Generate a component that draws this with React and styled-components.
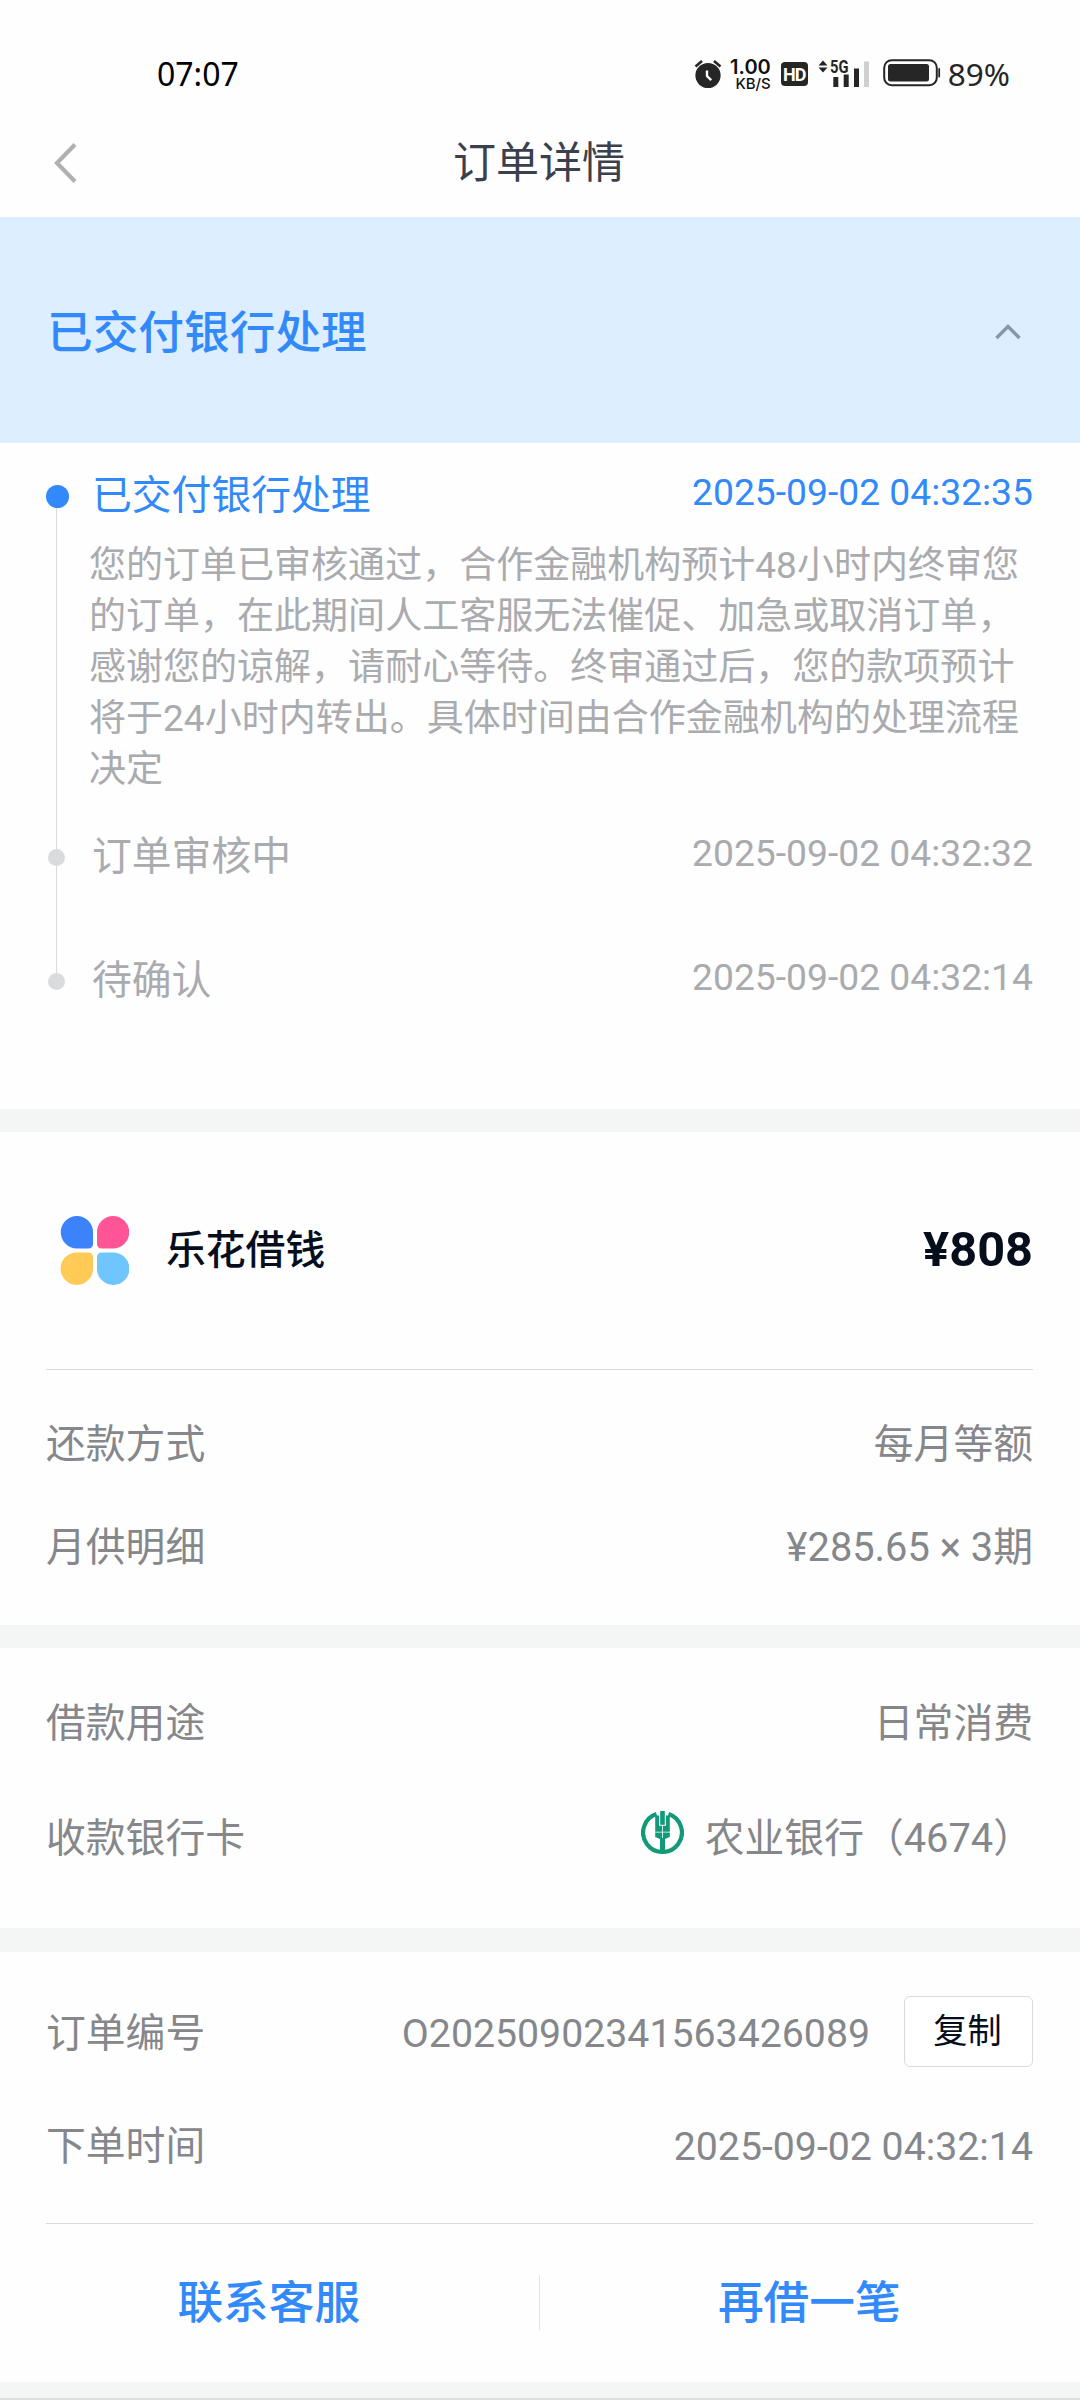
import styled, { createGlobalStyle } from 'styled-components'

const colors = {
  blue: '#3189fa',
  banner: '#dceeff',
  ink: '#060e1c',
  title: '#3c3f4c',
  label: '#85878b',
  muted: '#aaabae',
  dot: '#dadbdd',
  line: '#d9dadc',
  band: '#f4f6f6',
  status: '#262626',
}

const fontSize = {
  small: '34.2px',
  number: '39.25px',
  body: '39.8px',
  title: '43px',
  large: '45.7px',
}

const GlobalStyle = createGlobalStyle`
  * {
    box-sizing: border-box;
  }

  body {
    margin: 0;
    background: #fefefe;
    font-family: Roboto, 'Noto Sans CJK SC', sans-serif;
  }
`

const Screen = styled.div`
  display: flex;
  flex-direction: column;
  width: 1080px;
  height: 2400px;
  overflow: hidden;
`

const StatusBar = styled.div`
  display: flex;
  justify-content: space-between;
  align-items: center;
  height: 107px;
  padding: 40px 70px 0 157px;
  color: ${colors.status};
  font-family: 'Noto Sans', sans-serif;
  font-size: 32px;
  line-height: 36px;
`

const Clock = styled.span`
  color: #000;
`

const StatusIcons = styled.div`
  display: flex;
  align-items: center;
  font-size: 31.5px;
`

const Speed = styled.div`
  display: flex;
  flex-direction: column;
  align-items: flex-end;
  width: 40px;
  margin: 0 10px 0 9px;
  color: #111;
  font-family: Inter, sans-serif;
  font-size: 20px;
  font-weight: 600;
  line-height: 20px;

  small {
    font-size: 15px;
    font-weight: 500;
    line-height: 14px;
  }
`

const HdBadge = styled.span`
  display: flex;
  justify-content: center;
  width: 27px;
  height: 24px;
  border-radius: 4px;
  background: ${colors.status};
  color: #fff;
  font-family: Roboto, sans-serif;
  font-size: 18px;
  font-weight: 700;
  line-height: 25px;
  letter-spacing: -1px;
`

const Signal = styled.svg`
  margin-left: 10px;
`

const Battery = styled.svg`
  margin: -2px 7px 0 13px;
`

const Header = styled.div`
  display: grid;
  grid-template-columns: 100px 1fr 102px;
  align-items: center;
  height: 110px;

  h1 {
    margin: 0;
    padding-top: 2px;
    color: ${colors.title};
    font-size: ${fontSize.title};
    font-weight: 400;
    line-height: 60px;
    text-align: center;
  }
`

const Back = styled.svg`
  margin: 2px 0 0 52px;
`

const Banner = styled.div`
  display: flex;
  justify-content: space-between;
  align-items: center;
  height: 226px;
  padding: 0 59px 0 47px;
  background: ${colors.banner};
  color: ${colors.blue};
  font-size: ${fontSize.large};
  font-weight: 500;

  span {
    padding-bottom: 3px;
  }

  svg {
    margin-top: 3px;
  }
`

const Timeline = styled.ol`
  height: 666px;
  margin: 0;
  padding: 27px 47px 0 45px;
  list-style: none;
`

const TimelineItem = styled.li`
  display: flex;
  height: ${(props) => props.$height}px;
  color: ${(props) => (props.$active ? colors.blue : colors.muted)};
`

const Rail = styled.div`
  display: flex;
  flex-direction: column;
  align-items: center;
  width: 23px;
`

const RailLine = styled.span`
  width: 1px;
  height: ${(props) => props.$height || 'auto'};
  flex: ${(props) => (props.$height ? 'none' : 1)};
  background: ${(props) => (props.$hidden ? 'transparent' : colors.line)};
`

const Dot = styled.span`
  flex: none;
  width: ${(props) => (props.$active ? 23 : 17)}px;
  height: ${(props) => (props.$active ? 23 : 17)}px;
  margin-left: ${(props) => (props.$active ? 2 : 0)}px;
  border-radius: 50%;
  background: ${(props) => (props.$active ? colors.blue : colors.dot)};
`

const Step = styled.div`
  flex: 1;
  min-width: 0;
`

const StepHead = styled.div`
  display: flex;
  justify-content: space-between;
  align-items: center;
  height: 48px;
  padding-left: 24px;
  font-size: ${fontSize.body};
  line-height: 48px;

  span {
    padding-top: 3px;
  }

  time {
    padding-bottom: 4px;
    font-size: 37.25px;
  }
`

const Description = styled.p`
  width: 945px;
  margin: 22px 0 0 21px;
  color: ${colors.muted};
  font-size: 37.03px;
  line-height: 51.1px;
`

const Band = styled.div`
  flex: none;
  height: ${(props) => props.$height || 23}px;
  background: ${colors.band};
`

const Section = styled.section`
  height: ${(props) => props.$height}px;
  padding: ${(props) => props.$top || 0}px 47px 0 46px;
`

const Product = styled.div`
  display: flex;
  align-items: center;
  height: 238px;
  margin-bottom: 23px;
  border-bottom: 1px solid ${colors.line};
  color: ${colors.ink};
`

const ProductName = styled.span`
  flex: 1;
  margin-left: 37px;
  padding-bottom: 8px;
  font-size: ${fontSize.body};
  font-weight: 500;
`

const Amount = styled.strong`
  padding-bottom: 3px;
  font-size: 48.7px;
  font-weight: 700;
`

const Row = styled.div`
  display: flex;
  align-items: center;
  justify-content: space-between;
  height: ${(props) => props.$height}px;
  color: ${colors.label};
  font-size: ${fontSize.body};
  line-height: 50px;
`

const Value = styled.span`
  display: flex;
  align-items: center;
  font-size: ${(props) => (props.$number ? fontSize.number : 'inherit')};
`

const BankLogo = styled.svg`
  margin: -12px 21px 0 0;
`

const CopyButton = styled.button`
  width: 129px;
  height: 71px;
  margin: -4px 0 0 34px;
  padding: 0 2px 1px 0;
  border: 1px solid ${colors.line};
  border-radius: 6px;
  background: #fff;
  color: ${colors.ink};
  font: inherit;
  font-size: ${fontSize.small};
  line-height: 60px;
`

const Divider = styled.hr`
  height: 1px;
  margin: 20px 0 0;
  border: 0;
  background: ${colors.line};
`

const Actions = styled.div`
  display: flex;
  align-items: center;
  height: 157px;
  margin: 0 -46px 0 -47px;
`

const Action = styled.a`
  flex: 1;
  padding-top: 2px;
  color: ${colors.blue};
  font-size: ${fontSize.large};
  font-weight: 500;
  line-height: 53px;
  text-align: center;

  & + & {
    border-left: 1px solid #e2e3e5;
  }
`

const BottomEdge = styled.div`
  flex: 1;
  border-bottom: 2px solid #dcdddd;
  background: ${colors.band};
`

const steps = [
  {
    title: '已交付银行处理',
    time: '2025-09-02 04:32:35',
    height: 361,
    description:
      '您的订单已审核通过，合作金融机构预计48小时内终审您的订单，在此期间人工客服无法催促、加急或取消订单，感谢您的谅解，请耐心等待。终审通过后，您的款项预计将于24小时内转出。具体时间由合作金融机构的处理流程决定',
  },
  { title: '订单审核中', time: '2025-09-02 04:32:32', height: 124 },
  { title: '待确认', time: '2025-09-02 04:32:14', height: 48 },
]

const AlarmIcon = () => (
  <svg width="28" height="30" viewBox="0 0 28 30" fill="none">
    <circle cx="14" cy="16.5" r="12.6" fill={colors.status} />
    <path d="M1.5 7.5 8 2M26.5 7.5 20 2" stroke={colors.status} strokeWidth="2.6" />
    <path d="M13 11.5v5.6l4.2 4" stroke="#fff" strokeWidth="2.4" />
  </svg>
)

const SignalIcon = () => (
  <Signal width="52" height="38" viewBox="0 -4 52 38" fill={colors.status}>
    <path d="M.5 6.5 5 1.5l4.5 5zM.5 8.5 5 13.5l4.5-5z" />
    <text x="12" y="13.500" fontFamily="Roboto" fontSize="17.5" fontWeight="700" textLength="18.5" lengthAdjust="spacingAndGlyphs">
      5G
    </text>
    <rect x="15.3" y="18" width="5" height="10" />
    <rect x="25.7" y="15.5" width="5" height="12.5" />
    <rect x="36" y="9.5" width="5" height="18.5" />
    <rect x="46" y="2.5" width="5" height="25.5" fill="#cfcfcf" />
  </Signal>
)

const BatteryIcon = () => (
  <Battery width="58" height="28" viewBox="0 0 58 28">
    <rect x="1.2" y="1.2" width="52.6" height="25" rx="7.5" fill="none" stroke={colors.status} strokeWidth="2" />
    <rect x="5" y="5" width="41" height="17.5" rx="2.5" fill={colors.status} />
    <rect x="55.3" y="9" width="1.8" height="9.5" rx="0.9" fill={colors.status} />
  </Battery>
)

const CloverLogo = () => (
  <svg width="83" height="83" viewBox="0 0 83 83">
    <path d="M31 7a16 16 0 0 1 16 16v12a4.5 4.5 0 0 1-4.5 4.5H31A16.2 16.2 0 0 1 31 7z" fill="#3c83fb" />
    <path d="M67 7a16.2 16.2 0 0 1 0 32.5H55.5A4.5 4.5 0 0 1 51 35V23A16 16 0 0 1 67 7z" fill="#ff5597" />
    <path d="M31 43.5h11.5A4.5 4.5 0 0 1 47 48v12a16.2 16.2 0 1 1-16-16.5z" fill="#ffca55" />
    <path d="M55.5 43.5H67A16.2 16.2 0 1 1 51 60V48a4.5 4.5 0 0 1 4.5-4.5z" fill="#6fc6ff" />
  </svg>
)

const WheatLogo = () => (
  <BankLogo width="43" height="43" viewBox="0 0 43 43" fill="#109a78">
    <path d="M15.5 3.1A19.4 19.4 0 1 0 27.5 3.1" fill="none" stroke="#109a78" strokeWidth="4.2" />
    <path d="M19.2 0h4.6v13.8h-4.6z" />
    <path d="M14.2 4.5h3.8v10.3h3.1v5.9h-6.9zM28.8 4.5H25v10.3h-3.1v5.9h6.9z" />
    <path d="M14.2 21.5h6.9V28H19l-4.8-2zM28.8 21.5h-6.900V28H24l4.8-2z" />
    <path d="M19 27h5v14h-5z" />
  </BankLogo>
)

const App = () => {
  return (
    <>
      <GlobalStyle />
      <Screen>
        <StatusBar>
          <Clock>07:07</Clock>
          <StatusIcons>
            <AlarmIcon />
            <Speed>
              1.00
              <small>KB/S</small>
            </Speed>
            <HdBadge>HD</HdBadge>
            <SignalIcon />
            <BatteryIcon />
            <span>89%</span>
          </StatusIcons>
        </StatusBar>

        <Header>
          <Back width="26" height="42" viewBox="0 0 26 42" fill="none">
            <path d="M23 2.5 5 21l18 18.5" stroke="#b0b0b0" strokeWidth="4.2" />
          </Back>
          <h1>订单详情</h1>
        </Header>

        <Banner>
          <span>已交付银行处理</span>
          <svg width="26" height="16" viewBox="0 0 26 16" fill="none">
            <path d="M1.5 14 13 2.5 24.5 14" stroke="#8797a7" strokeWidth="3.4" />
          </svg>
        </Banner>

        <Timeline>
          {steps.map((step, index) => (
            <TimelineItem key={step.title} $height={step.height} $active={index === 0}>
              <Rail>
                <RailLine $height={index === 0 ? '15px' : '18px'} $hidden={index === 0} />
                <Dot $active={index === 0} />
                <RailLine $hidden={index === steps.length - 1} />
              </Rail>
              <Step>
                <StepHead>
                  <span>{step.title}</span>
                  <time>{step.time}</time>
                </StepHead>
                {step.description && <Description>{step.description}</Description>}
              </Step>
            </TimelineItem>
          ))}
        </Timeline>

        <Band />

        <Section $height={493}>
          <Product>
            <CloverLogo />
            <ProductName>乐花借钱</ProductName>
            <Amount>¥808</Amount>
          </Product>
          <Row $height={103}>
            <span>还款方式</span>
            <Value>每月等额</Value>
          </Row>
          <Row $height={103}>
            <span>月供明细</span>
            <Value>¥285.65 × 3期</Value>
          </Row>
        </Section>

        <Band />

        <Section $height={280} $top={18}>
          <Row $height={115}>
            <span>借款用途</span>
            <Value>日常消费</Value>
          </Row>
          <Row $height={115}>
            <span>收款银行卡</span>
            <Value>
              <WheatLogo />
              农业银行（4674）
            </Value>
          </Row>
        </Section>

        <Band $height={24} />

        <Section $height={430} $top={25}>
          <Row $height={113}>
            <span>订单编号</span>
            <Value $number>
              O20250902341563426089
              <CopyButton>复制</CopyButton>
            </Value>
          </Row>
          <Row $height={113}>
            <span>下单时间</span>
            <Value $number>2025-09-02 04:32:14</Value>
          </Row>
          <Divider />
          <Actions>
            <Action>联系客服</Action>
            <Action>再借一笔</Action>
          </Actions>
        </Section>

        <BottomEdge />
      </Screen>
    </>
  )
}

export default App
